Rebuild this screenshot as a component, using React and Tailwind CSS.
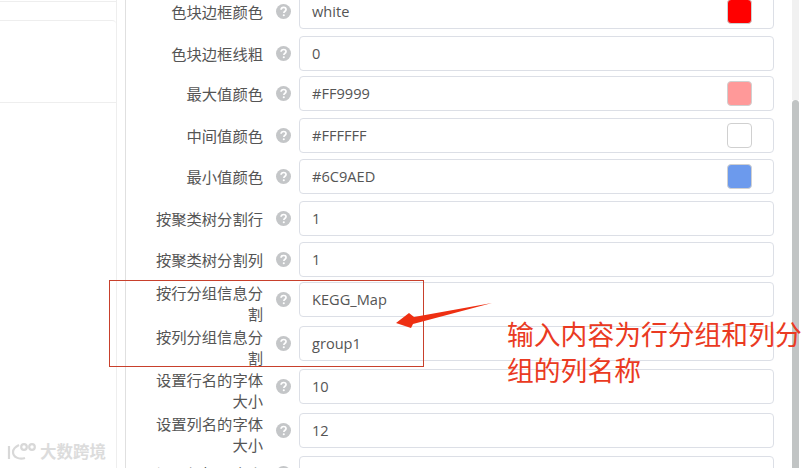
const rows = [
  { label: '色块边框颜色', value: 'white', swatch: 'bg-[#ff0000]', gap: 'mb-[7px]' },
  { label: '色块边框线粗', value: '0', gap: 'mb-[5px]' },
  { label: '最大值颜色', value: '#FF9999', swatch: 'bg-[#ff9999]', gap: 'mb-[7px]' },
  { label: '中间值颜色', value: '#FFFFFF', swatch: 'bg-white', gap: 'mb-[6px]' },
  { label: '最小值颜色', value: '#6C9AED', swatch: 'bg-[#6c9aed]', gap: 'mb-[7px]' },
  { label: '按聚类树分割行', value: '1', gap: 'mb-[6px]' },
  { label: '按聚类树分割列', value: '1', gap: 'mb-[5px]' },
  { label: '按行分组信息分割', value: 'KEGG_Map', wrap: true, gap: 'mb-[9px]' },
  { label: '按列分组信息分割', value: 'group1', wrap: true, gap: 'mb-[8px]' },
  { label: '设置行名的字体大小', value: '10', wrap: true, gap: 'mb-[9px]' },
  { label: '设置列名的字体大小', value: '12', wrap: true, gap: 'mb-[8px]' },
  { label: '设置组标题大小', value: '', gap: 'mb-0' },
];

const HelpIcon = () => (
  <svg viewBox="0 0 16 16" className="w-[15px] h-[15px]">
    <circle cx="8" cy="8" r="8" fill="#c4c6c8" />
    <path d="M5.4 6.2C5.5 4.6 6.6 3.7 8.1 3.7c1.5 0 2.6.9 2.6 2.2 0 1.1-.7 1.6-1.4 2.1-.6.4-.9.8-.9 1.5" fill="none" stroke="#fff" strokeWidth="1.8" />
    <circle cx="8.3" cy="12" r="1.1" fill="#fff" />
  </svg>
);

const FormRow = ({ row }) => (
  <div className={`flex h-[35px] shrink-0 ${row.gap}`}>
    <label className={`w-[108px] pt-px text-right text-[15.3px] text-[#555555] ${row.wrap ? 'leading-[21px]' : 'leading-[35px]'}`}>
      {row.label}
    </label>
    <div className="w-[36px] flex items-center justify-center pl-[4px]">
      <HelpIcon />
    </div>
    <div className="flex flex-1 items-center justify-between border border-[#dcdfe6] rounded pl-3 pr-[21px] text-[14.6px] text-[#555555]">
      <span className="pt-px">{row.value}</span>
      {row.swatch && <span className={`w-[25px] h-[25px] rounded-sm border border-[#d0d0d0] ${row.swatch}`} />}
    </div>
  </div>
);

const Watermark = () => (
  <div className="absolute left-[7px] top-[442px] flex items-center gap-[3px] text-[#dcdcdc]">
    <svg viewBox="0 0 30 20" className="w-[30px] h-[20px]" fill="none" stroke="#d8d8d8" strokeWidth="2.2">
      <path d="M2 4v13M12 3C8 5 6 8 6 10c0 5 6 8 12 6" />
      <circle cx="17" cy="5" r="2.8" />
      <circle cx="25" cy="5" r="2.8" />
    </svg>
    <span className="text-[16.5px] font-bold leading-[20px]">大数跨境</span>
  </div>
);

export default function App() {
  return (
    <div className="relative flex w-[805px] h-[468px] overflow-hidden bg-white font-['Open_Sans','Noto_Sans_CJK_SC',sans-serif]">
      <aside className="w-[117px] shrink-0 border-r border-[#eeeeee] pt-px">
        <div className="border-t border-[#eeeeee]" />
        <div className="mt-[18px] h-[82px] border-t border-[#eeeeee] rounded-tr" />
        <div className="border-t border-[#eeeeee]" />
      </aside>
      <main className="ml-[8px] w-[667px] shrink-0 border-l border-[#e0e0e0] pl-[29px] pr-[18px] -mt-[6px] h-[480px]">
        {rows.map((row) => (
          <FormRow key={row.label} row={row} />
        ))}
      </main>
      <div className="w-[7px] shrink-0 flex flex-col">
        <div className="h-[100px] bg-[#f1f1f1]" />
        <div className="flex-1 bg-[#c1c4c4] rounded-t-sm" />
      </div>

      <div className="absolute left-[109px] top-[280px] w-[315px] h-[87px] border border-[#c8402c]" />
      <svg viewBox="0 0 100 30" className="absolute left-[395px] top-[302px] w-[100px] h-[30px]">
        <path d="M97 1 L19 15 L14 11 L1 21 L16 26 L18 22 Z" fill="#ee2f12" />
      </svg>
      <div className="absolute left-[507px] top-[317px] w-[297px] text-[26.8px] leading-[36px] text-[#ea3a22]">
        输入内容为行分组和列分组的列名称
      </div>
      <Watermark />
    </div>
  );
}
